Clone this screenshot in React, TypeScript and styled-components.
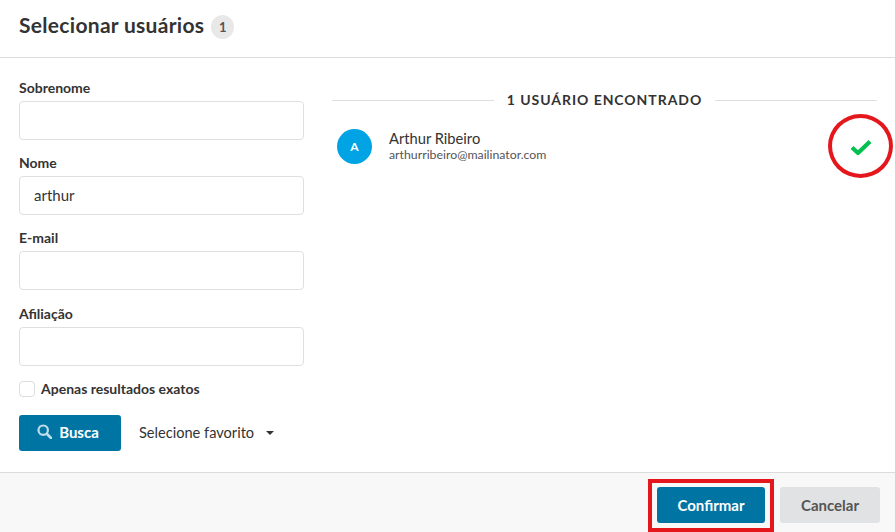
import React from 'react';
import styled, { createGlobalStyle } from 'styled-components';

const GlobalStyle = createGlobalStyle`
  html, body {
    margin: 0;
    padding: 0;
    background: #fff;
  }
  body {
    font-family: 'Lato', 'Noto Sans', sans-serif;
    color: #333;
    overflow: hidden;
  }
  * {
    box-sizing: border-box;
  }
`;

const Modal = styled.div`
  width: 895px;
  height: 532px;
  display: flex;
  flex-direction: column;
  background: #fff;
`;

const Header = styled.header`
  height: 58px;
  flex: none;
  display: flex;
  align-items: flex-start;
  gap: 7px;
  padding: 15px 19px 0;
  border-bottom: 1px solid #dcdcdc;
`;

const Title = styled.h1`
  margin: -1px 0 0;
  font-size: 21px;
  line-height: 21px;
  font-weight: 700;
  letter-spacing: 0.3px;
  color: #333;
`;

const CountBadge = styled.span`
  width: 23px;
  height: 24px;
  border-radius: 50%;
  background: #e8e8e8;
  color: #555;
  font-size: 13px;
  font-weight: 700;
  display: flex;
  align-items: center;
  justify-content: center;
`;

const Body = styled.div`
  flex: 1;
  display: flex;
  gap: 28px;
  padding: 22px 18px 0 19px;
`;

const SearchForm = styled.form`
  width: 285px;
  flex: none;
  display: flex;
  flex-direction: column;
`;

const Field = styled.div`
  display: flex;
  flex-direction: column;
  margin-bottom: 15.2px;
`;

const Label = styled.label`
  height: 21px;
  font-size: 14px;
  line-height: 15px;
  font-weight: 700;
  color: #333;
`;

const Input = styled.input`
  height: 39px;
  width: 100%;
  padding: 0 14px 2px;
  border: 1px solid #dfdfdf;
  border-radius: 4px;
  background: #fff;
  font-family: inherit;
  font-size: 15px;
  color: #333;
  outline: none;
`;

const CheckRow = styled.label`
  display: flex;
  align-items: center;
  gap: 6px;
  margin-bottom: 18px;
  font-size: 14px;
  font-weight: 700;
  color: #333;
  height: 16px;
`;

const CheckText = styled.span`
  margin-top: -1px;
`;

const CheckBox = styled.span`
  width: 16px;
  height: 16px;
  border: 1px solid #dcdcdc;
  border-radius: 4px;
  background: #fff;
`;

const SearchActions = styled.div`
  display: flex;
  align-items: center;
  gap: 18px;
`;

const Button = styled.button<{ $variant?: 'primary' | 'muted' }>`
  height: 36px;
  border: none;
  border-radius: 3px;
  display: inline-flex;
  align-items: center;
  justify-content: center;
  gap: 7px;
  padding: 0 0 1px;
  font-family: inherit;
  font-size: 15px;
  font-weight: 700;
  background: ${(p) => (p.$variant === 'muted' ? '#e1e2e4' : '#0074a3')};
  color: ${(p) => (p.$variant === 'muted' ? '#555' : '#fff')};
`;

const SearchButton = styled(Button)`
  width: 102px;
  padding: 0 4px 2px 0;
`;

const FavoriteSelect = styled.div`
  display: flex;
  align-items: center;
  gap: 12px;
  font-size: 14.6px;
  color: #333;
`;

const Caret = styled.span`
  width: 0;
  height: 0;
  border-left: 4px solid transparent;
  border-right: 4px solid transparent;
  border-top: 4px solid #333;
`;

const Results = styled.section`
  flex: 1;
  display: flex;
  flex-direction: column;
  padding-top: 10px;
`;

const ResultsHeading = styled.div`
  display: flex;
  align-items: center;
  gap: 13px;
  height: 20px;
  margin-bottom: 19px;
  font-size: 14px;
  font-weight: 700;
  letter-spacing: 0.95px;
  color: #333;

  &::before,
  &::after {
    content: '';
    flex: 1;
    height: 1px;
    background: #dedede;
  }
`;

const HeadingText = styled.span`
  margin-top: -2px;
`;

const UserRow = styled.div`
  display: flex;
  align-items: center;
  gap: 17px;
  padding: 0 5px 0 5px;
`;

const Avatar = styled.div`
  width: 35px;
  height: 35px;
  border-radius: 50%;
  background: #00a4e4;
  color: #fff;
  font-size: 12px;
  font-weight: 700;
  display: flex;
  align-items: center;
  justify-content: center;
`;

const UserInfo = styled.div`
  flex: 1;
  display: flex;
  flex-direction: column;
  margin-top: -2px;
`;

const UserName = styled.span`
  font-size: 14.7px;
  line-height: 18px;
  color: #333;
`;

const UserEmail = styled.span`
  font-size: 12.3px;
  line-height: 15px;
  color: #555;
`;

const CheckMark = styled.svg`
  width: 22px;
  height: 18px;
  flex: none;
`;

const Footer = styled.footer`
  height: 60px;
  flex: none;
  display: flex;
  align-items: flex-start;
  justify-content: flex-end;
  gap: 15px;
  padding: 14px 15px 0 0;
  background: #f8f8f8;
  border-top: 1px solid #dcdcdc;
`;

const ConfirmButton = styled(Button)`
  width: 108px;
`;

const CancelButton = styled(Button)`
  width: 100px;
`;

const HighlightCircle = styled.div`
  position: absolute;
  left: 828px;
  top: 114px;
  width: 65px;
  height: 64px;
  border: 4px solid #e4181c;
  border-radius: 50%;
  pointer-events: none;
`;

const HighlightBox = styled.div`
  position: absolute;
  left: 648px;
  top: 479px;
  width: 126px;
  height: 53px;
  border: 4px solid #e4181c;
  pointer-events: none;
`;

const Page = styled.div`
  position: relative;
  width: 895px;
  height: 532px;
`;

const SearchIcon = () => (
  <svg width="15" height="15" viewBox="0 0 15 15" fill="none">
    <circle cx="6.2" cy="6.2" r="4.7" stroke="#bfdce8" strokeWidth="2.2" />
    <path d="M10 10l4 4" stroke="#bfdce8" strokeWidth="2.6" strokeLinecap="round" />
  </svg>
);

const fields = [
  { label: 'Sobrenome', value: '' },
  { label: 'Nome', value: 'arthur' },
  { label: 'E-mail', value: '' },
  { label: 'Afiliação', value: '' },
];

const App: React.FC = () => (
  <Page>
    <GlobalStyle />
    <Modal>
      <Header>
        <Title>Selecionar usuários</Title>
        <CountBadge>1</CountBadge>
      </Header>
      <Body>
        <SearchForm>
          {fields.map((f) => (
            <Field key={f.label}>
              <Label>{f.label}</Label>
              <Input defaultValue={f.value} />
            </Field>
          ))}
          <CheckRow>
            <CheckBox />
            <CheckText>Apenas resultados exatos</CheckText>
          </CheckRow>
          <SearchActions>
            <SearchButton type="button">
              <SearchIcon />
              Busca
            </SearchButton>
            <FavoriteSelect>
              Selecione favorito
              <Caret />
            </FavoriteSelect>
          </SearchActions>
        </SearchForm>
        <Results>
          <ResultsHeading>
            <HeadingText>1 USUÁRIO ENCONTRADO</HeadingText>
          </ResultsHeading>
          <UserRow>
            <Avatar>A</Avatar>
            <UserInfo>
              <UserName>Arthur Ribeiro</UserName>
              <UserEmail>arthurribeiro@mailinator.com</UserEmail>
            </UserInfo>
            <CheckMark viewBox="0 0 22 18" fill="none">
              <path d="M2 9.5l6 5.5L20 3.5" stroke="#00c04f" strokeWidth="4.2" strokeLinejoin="round" />
            </CheckMark>
          </UserRow>
        </Results>
      </Body>
      <Footer>
        <ConfirmButton type="button">Confirmar</ConfirmButton>
        <CancelButton type="button" $variant="muted">Cancelar</CancelButton>
      </Footer>
    </Modal>
    <HighlightCircle />
    <HighlightBox />
  </Page>
);

export default App;
